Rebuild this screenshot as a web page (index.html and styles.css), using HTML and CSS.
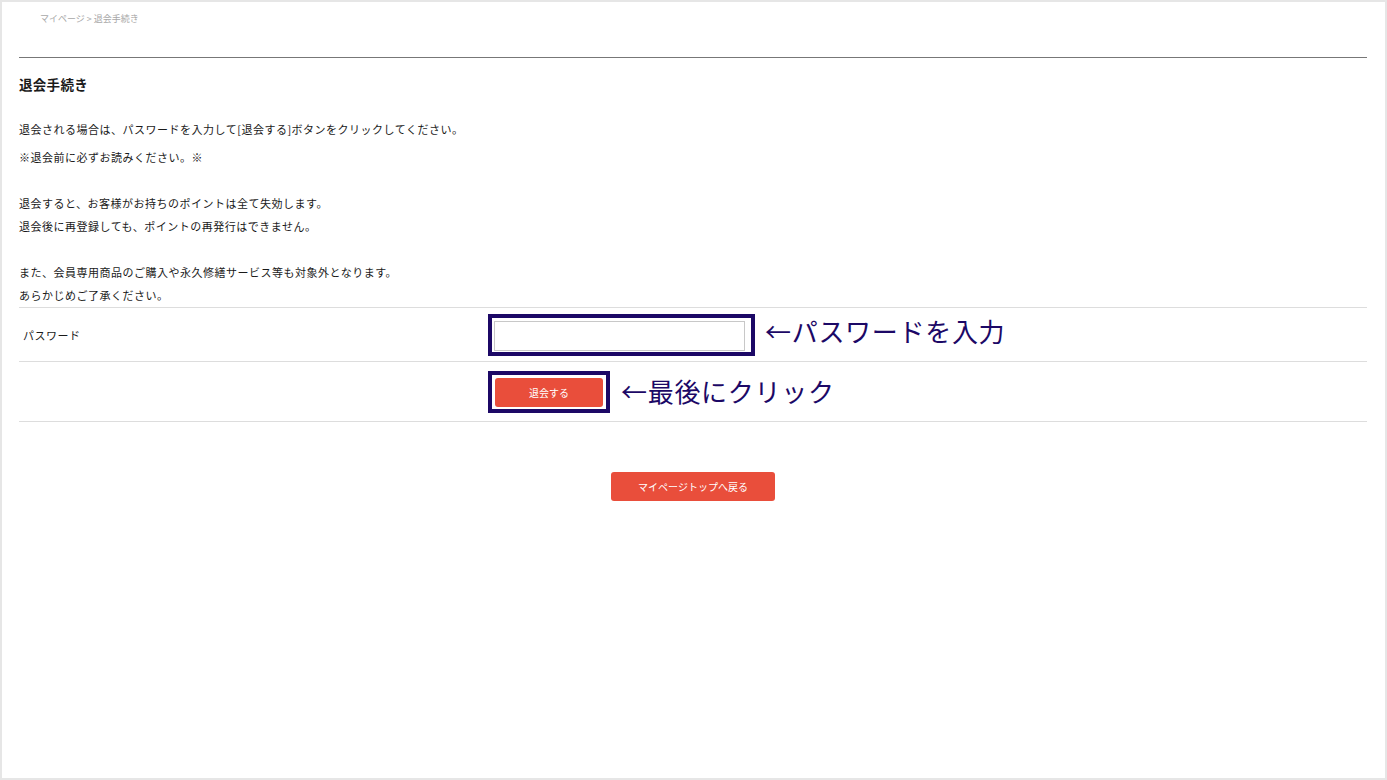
FILE: index.html
```html
<!DOCTYPE html>
<html lang="ja">
<head>
    <meta charset="UTF-8">
    <meta name="viewport" content="width=device-width, initial-scale=1.0">
    <title>退会手続き</title>
    <link rel="stylesheet" href="styles.css">
</head>
<body>

<div class="page">
    <div class="breadcrumb">マイページ &gt; 退会手続き</div>
    <hr class="rule">

    <h1>退会手続き</h1>

    <p class="lead">退会される場合は、パスワードを入力して[退会する]ボタンをクリックしてください。</p>
    <p class="notice">
        ※退会前に必ずお読みください。※<br>
        <br>
        退会すると、お客様がお持ちのポイントは全て失効します。<br>
        退会後に再登録しても、ポイントの再発行はできません。<br>
        <br>
        また、会員専用商品のご購入や永久修繕サービス等も対象外となります。<br>
        あらかじめご了承ください。
    </p>

    <form id="withdrawForm">
        <table class="withdraw-table">
            <tr class="row-password">
                <th>パスワード</th>
                <td>
                    <div class="with-note">
                        <span class="mark mark-input">
                            <input type="password" id="password" name="password">
                        </span>
                        <span class="note note-input">←パスワードを入力</span>
                    </div>
                </td>
            </tr>
            <tr class="row-submit">
                <th></th>
                <td>
                    <div class="with-note">
                        <span class="mark mark-button">
                            <button type="submit" class="btn btn-withdraw">退会する</button>
                        </span>
                        <span class="note note-click">←最後にクリック</span>
                    </div>
                </td>
            </tr>
        </table>
    </form>

    <div class="back">
        <a href="#" class="btn btn-back">マイページトップへ戻る</a>
    </div>
</div>

</body>
</html>
```

FILE: styles.css
```css
html, body {
    margin: 0;
    padding: 0;
}

body {
    font-family: "Noto Sans CJK JP", "Liberation Serif", serif;
    color: #1a1a1a;
    background-color: #fff;
}

.page {
    min-height: 100vh;
    box-sizing: border-box;
    border: 2px solid #e6e6e6;
    padding: 0 18px 0 17px;
}

.breadcrumb {
    padding: 10px 0 0 21px;
    font-size: 9px;
    line-height: 14px;
    color: #a8a8a8;
}

.rule {
    margin: 31px 0 0;
    border: none;
    border-top: 1px solid #777;
}

h1 {
    margin: 16px 0 0;
    font-size: 13.5px;
    line-height: 20px;
    font-weight: bold;
    letter-spacing: 0.3px;
}

.lead, .notice {
    font-size: 11px;
    letter-spacing: 0.5px;
    margin: 0;
}

.lead {
    margin-top: 24px;
    line-height: 23px;
}

.notice {
    margin-top: 5px;
    line-height: 23px;
}

.withdraw-table {
    width: 100%;
    border-collapse: collapse;
}

.withdraw-table tr {
    border-top: 1px solid #ddd;
    border-bottom: 1px solid #ddd;
}

.withdraw-table th {
    width: 465px;
    padding: 0 0 0 4px;
    text-align: left;
    font-weight: normal;
    font-size: 11px;
    letter-spacing: 0.5px;
}

.withdraw-table td {
    padding: 0;
}

.row-password td {
    height: 53px;
}

.row-submit td {
    height: 59px;
}

.with-note {
    display: flex;
    align-items: center;
}

.mark {
    display: inline-flex;
    border: 4px solid #1c0866;
    background-color: #fff;
}

.mark-input {
    padding: 3px 6px 1px 2px;
}

.mark-input input {
    width: 251px;
    height: 30px;
    box-sizing: border-box;
    margin: 0;
    border: 1px solid #c8c8c8;
    padding: 4px 6px;
}

.mark-button {
    padding: 3px 3px 2px 3px;
}

.note {
    margin-left: 10px;
    font-size: 26px;
    line-height: 32px;
    letter-spacing: 0.7px;
    color: #1c0866;
}

.note-input {
    padding-bottom: 7px;
}

.note-click {
    margin-left: 11px;
    padding-bottom: 2px;
}

.btn {
    display: inline-block;
    box-sizing: border-box;
    height: 29px;
    line-height: 29px;
    border: none;
    border-radius: 3px;
    background-color: #e94e3b;
    color: #fff;
    font-family: "Noto Sans CJK JP", "Noto Sans", sans-serif;
    font-size: 10px;
    text-align: center;
    text-decoration: none;
    cursor: pointer;
    padding: 0;
}

.btn:hover {
    background-color: #d8412f;
}

.btn-withdraw {
    width: 108px;
}

.back {
    margin-top: 50px;
    text-align: center;
}

.btn-back {
    width: 164px;
}
```
